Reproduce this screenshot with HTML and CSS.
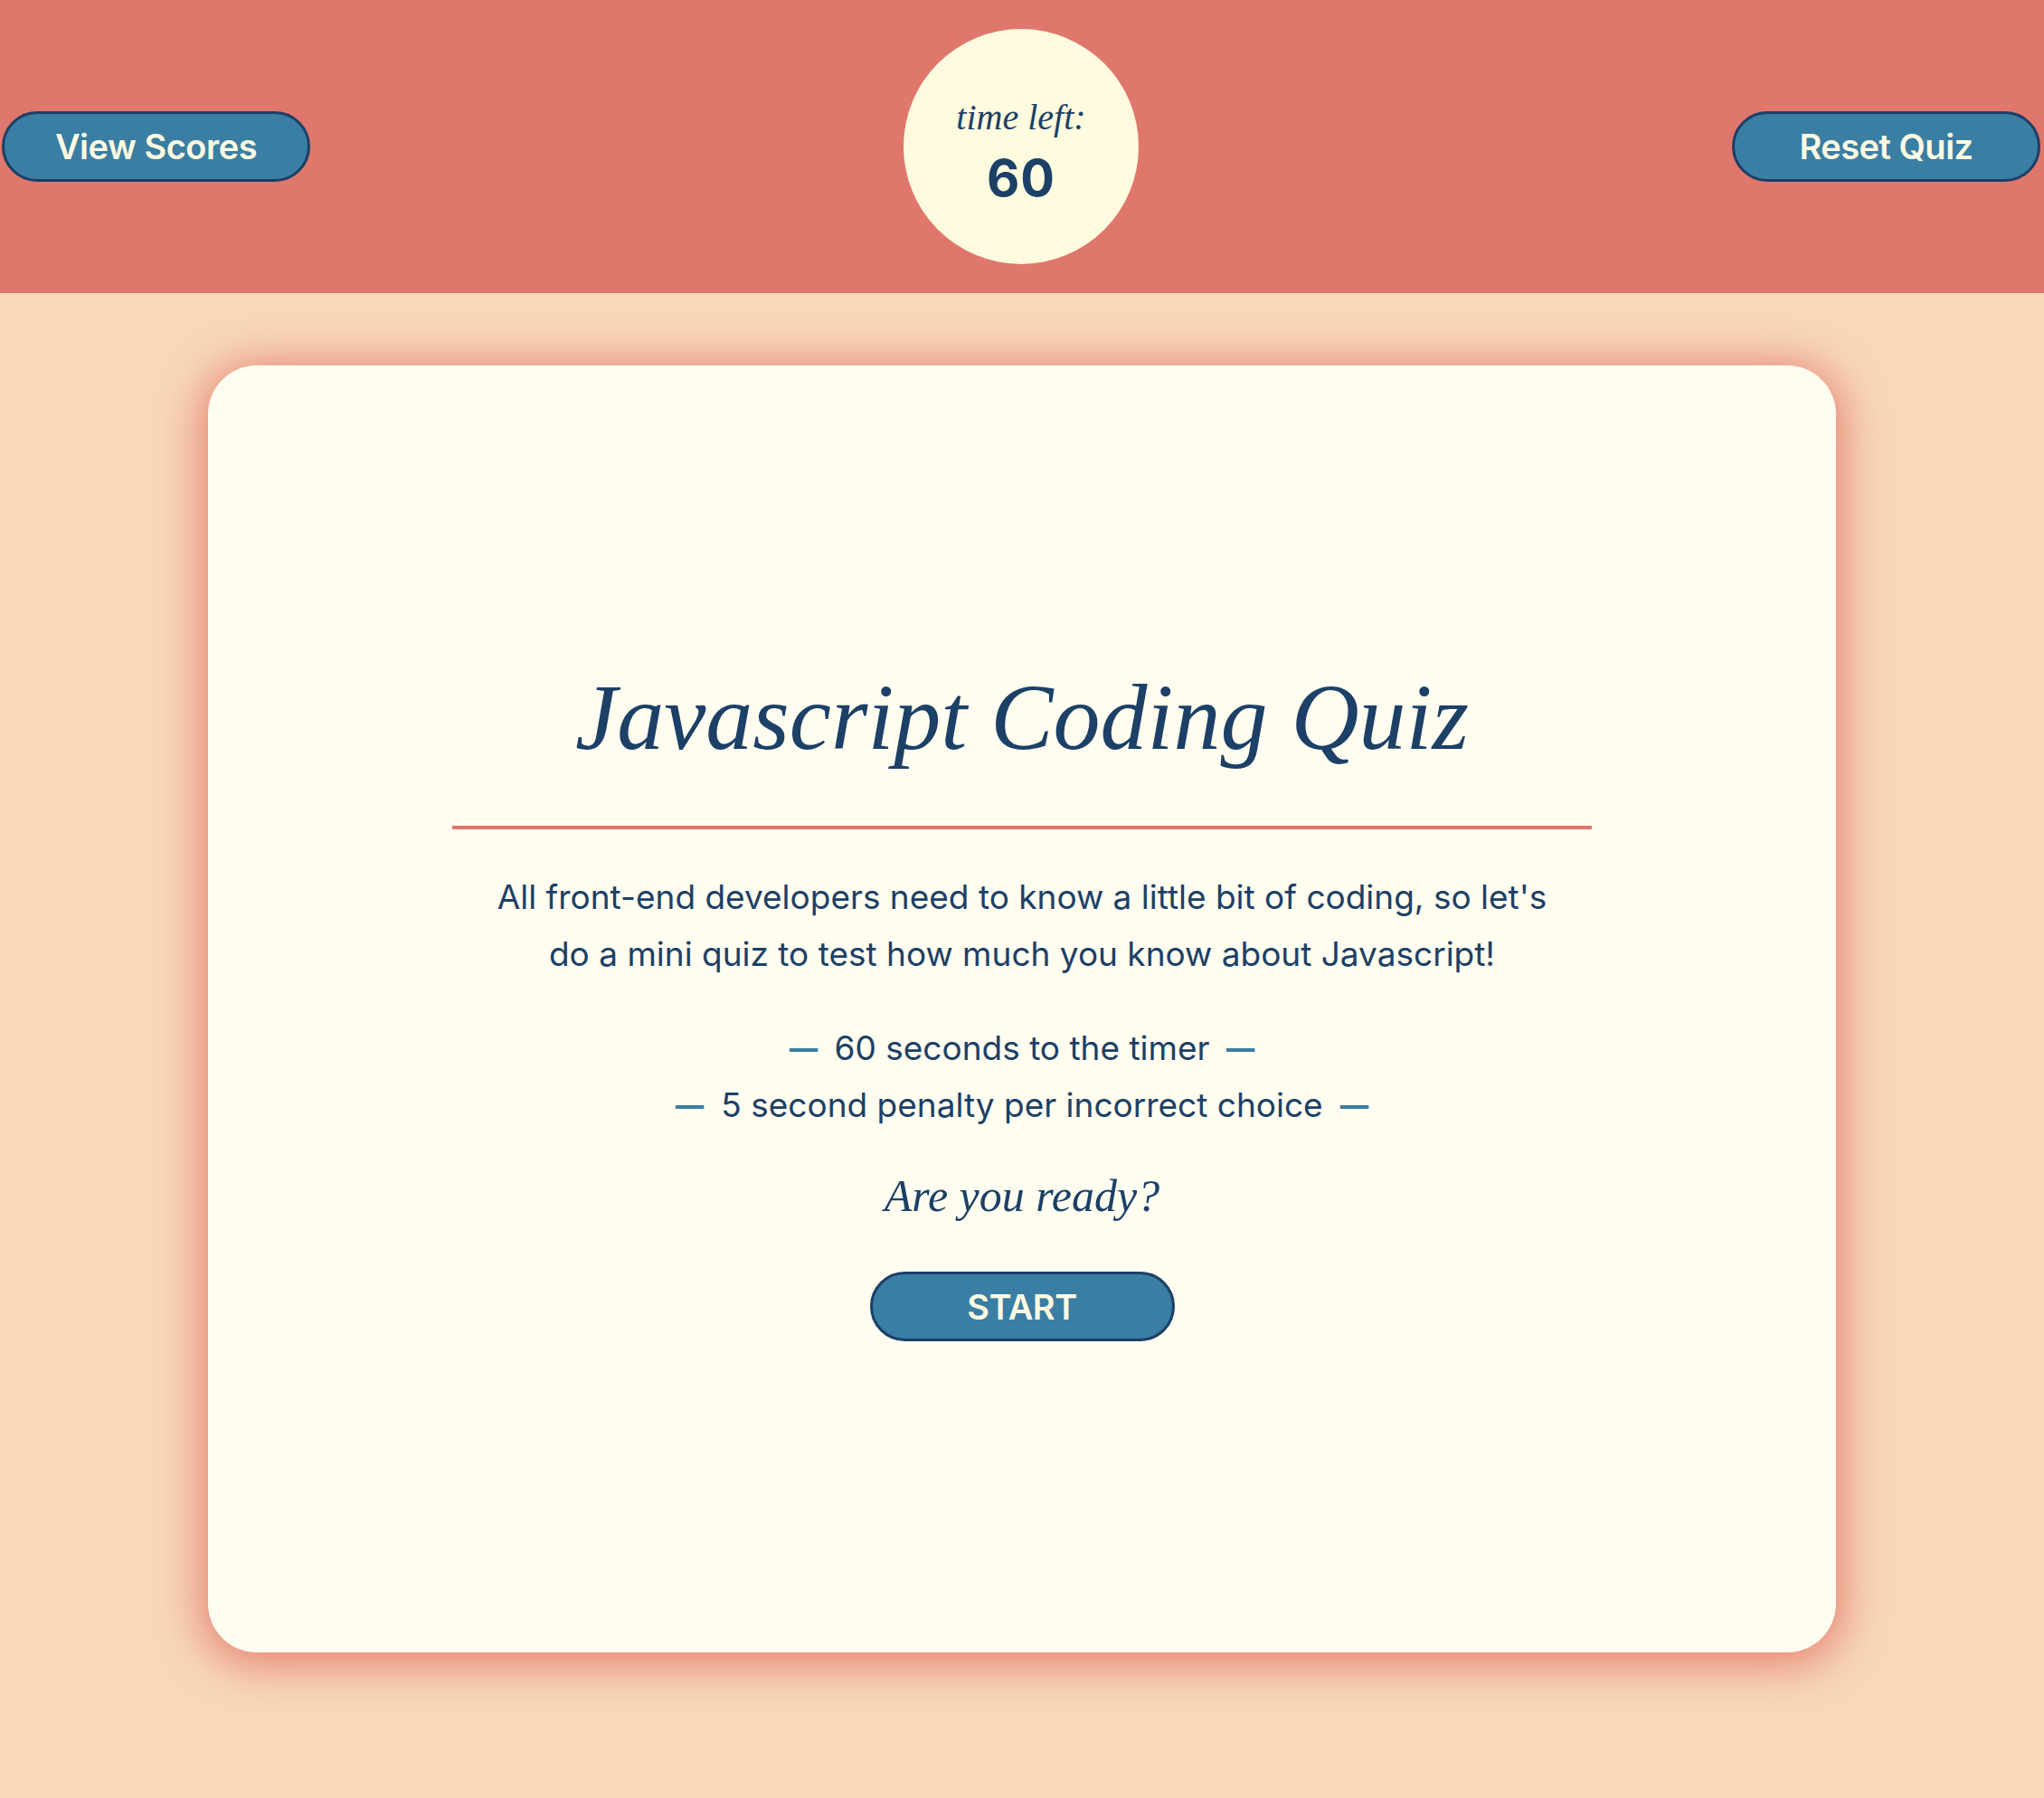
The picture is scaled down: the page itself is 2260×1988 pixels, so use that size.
FILE: index.html
```html
<!DOCTYPE html>
<html lang="en">
<head>
<meta charset="utf-8">
<title>Javascript Coding Quiz</title>
<link rel="stylesheet" href="styles.css">
</head>
<body>
<header class="top-bar">
  <button class="pill-btn">View Scores</button>
  <div class="timer">
    <span class="timer-label">time left:</span>
    <span class="timer-count">60</span>
  </div>
  <button class="pill-btn">Reset Quiz</button>
</header>
<main class="stage">
  <section class="quiz-card">
    <h1 class="quiz-title">Javascript Coding Quiz</h1>
    <hr class="divider">
    <p class="intro">All front-end developers need to know a little bit of coding, so let's<br>do a mini quiz to test how much you know about Javascript!</p>
    <ul class="rules">
      <li><span class="dash">—</span>60 seconds to the timer<span class="dash">—</span></li>
      <li><span class="dash">—</span>5 second penalty per incorrect choice<span class="dash">—</span></li>
    </ul>
    <p class="ready">Are you ready?</p>
    <button class="pill-btn start-btn">START</button>
  </section>
</main>
</body>
</html>
```

FILE: styles.css
```css
html, body {
  margin: 0;
  padding: 0;
}

body {
  background: #f8d8b9;
  color: #1c4066;
  font-family: Inter, "Liberation Sans", sans-serif;
  min-height: 1988px;
}

.top-bar {
  height: 324px;
  background: #e0776c;
  display: flex;
  align-items: center;
  justify-content: space-between;
  padding: 0 4px 0 2px;
  box-sizing: border-box;
}

.pill-btn {
  width: 341px;
  height: 78px;
  border: 3px solid #1c3f66;
  border-radius: 40px;
  background: #3a7ea3;
  color: #fffbe2;
  font-family: Inter, "Liberation Sans", sans-serif;
  font-size: 38px;
  font-weight: 600;
  letter-spacing: -0.5px;
  padding: 0;
  box-sizing: border-box;
  cursor: pointer;
}

.timer {
  width: 260px;
  height: 260px;
  border-radius: 50%;
  background: #fefbdf;
  display: flex;
  flex-direction: column;
  align-items: center;
  justify-content: center;
}

.timer-label {
  font-family: "Liberation Serif", serif;
  font-style: italic;
  font-size: 40px;
  line-height: 1;
  margin-top: 10px;
}

.timer-count {
  font-size: 56px;
  font-weight: 700;
  line-height: 1;
  margin-top: 19px;
  letter-spacing: 1px;
}

.stage {
  padding-top: 80px;
}

.quiz-card {
  width: 1800px;
  height: 1423px;
  margin: 0 auto;
  padding-bottom: 17px;
  background: #fffcf0;
  border-radius: 54px;
  box-shadow: 0 6px 48px 8px rgba(225, 112, 100, 0.82);
  display: flex;
  flex-direction: column;
  align-items: center;
  justify-content: center;
  text-align: center;
  box-sizing: border-box;
}

.quiz-title {
  font-family: "Liberation Serif", serif;
  font-style: italic;
  font-weight: 400;
  font-size: 104px;
  line-height: 1.2;
  margin: 0;
}

.divider {
  width: 70%;
  height: 4px;
  border: 0;
  background: #e0776c;
  margin: 58px 0 43px;
}

.intro {
  font-size: 37px;
  line-height: 63px;
  margin: 0;
}

.rules {
  list-style: none;
  padding: 0;
  margin: 41px 0 0;
  font-size: 37px;
  line-height: 63px;
}

.dash {
  color: #3a7ea3;
  font-weight: 600;
  margin: 0 16px;
  display: inline-block;
  transform: scaleX(0.85);
}

.ready {
  font-family: "Liberation Serif", serif;
  font-style: italic;
  font-size: 50px;
  line-height: 1.2;
  margin: 39px 0 0;
}

.start-btn {
  margin-top: 54px;
  width: 337px;
  height: 77px;
  font-weight: 600;
  font-size: 38px;
}
```
